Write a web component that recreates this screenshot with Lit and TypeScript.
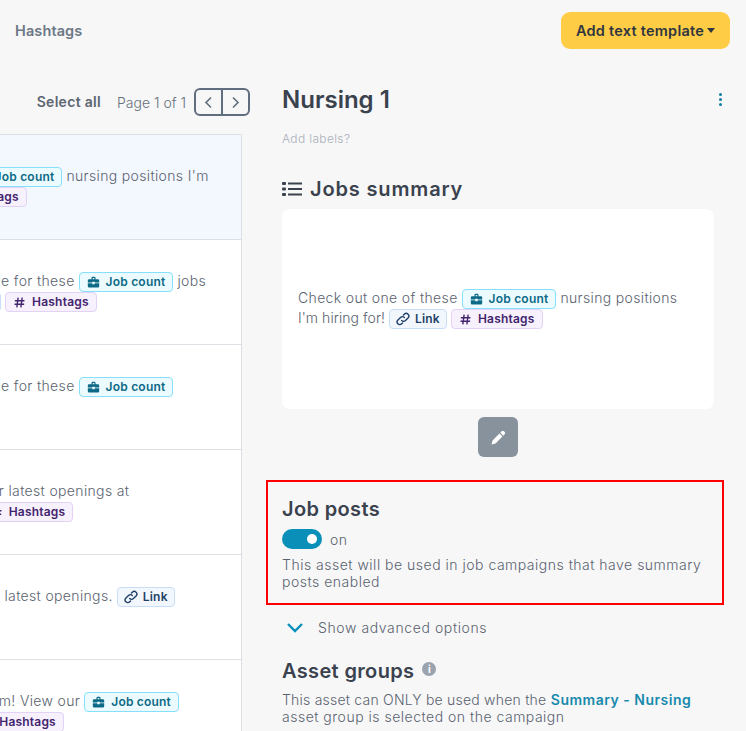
import { LitElement, html, css, svg } from "lit";
import { customElement } from "lit/decorators.js";

const bag = svg`<path fill="currentColor" d="M5.5 2.500A1.500 1.500 0 0 1 7 1h2a1.500 1.500 0 0 1 1.500 1.500V4h3A1.500 1.500 0 0 1 15 5.500V8H9.500V7h-3v1H1V5.500A1.500 1.500 0 0 1 2.500 4h3V2.500zM7 2.500V4h2V2.500H7zM1 9h5.500v1h3V9H15v3.500a1.500 1.500 0 0 1-1.500 1.500h-11A1.500 1.500 0 0 1 1 12.500V9z"/>`;
const link = svg`<g fill="none" stroke="currentColor" stroke-width="1.600" stroke-linecap="round"><path d="M6.500 9.800a3 3 0 0 0 4.300 0l3-3a3 3 0 0 0-4.300-4.300l-1 1"/><path d="M9.500 6.200a3 3 0 0 0-4.300 0l-3 3a3 3 0 0 0 4.300 4.300l1-1"/></g>`;
const hash = svg`<path fill="none" stroke="currentColor" stroke-width="1.700" d="M6.300 2 4.700 14M11.300 2 9.700 14M2.300 5.800h11.800M1.900 10.200h11.800"/>`;

function chip(kind: "job" | "link" | "hash") {
  const map = {
    job: ["Job count", bag],
    link: ["Link", link],
    hash: ["Hashtags", hash],
  } as const;
  const [label, icon] = map[kind];
  return html`<span class="chip ${kind}"><svg viewBox="0 0 16 16">${icon}</svg><span>${label}</span></span>`;
}
const t = (s: string) => html`<span class="t">${s}</span>`;

const rows = [
  { cls: "active first", lines: [
    { x: -196, c: html`${t("Check out one of these")}${chip("job")}${t("nursing positions I'm")}` },
    { x: -197, c: html`${t("hiring for!")}${chip("link")}${chip("hash")}` },
  ]},
  { cls: "", lines: [
    { x: -131, c: html`${t("We have a great role for these")}${chip("job")}${t("jobs")}` },
    { x: -133, c: html`${t("Apply now")}${chip("link")}${chip("hash")}` },
  ]},
  { cls: "", lines: [
    { x: -131, c: html`${t("We have a great role for these")}${chip("job")}` },
  ]},
  { cls: "", lines: [
    { x: -117, c: html`${t("Take a look at our latest openings at")}` },
    { x: -174, c: html`${t("our company")}${chip("link")}${chip("hash")}` },
  ]},
  { cls: "", lines: [
    { x: -121, c: html`${t("Take a look at our latest openings.")}${chip("link")}` },
  ]},
  { cls: "", lines: [
    { x: -138, c: html`${t("Join our nursing team! View our")}${chip("job")}` },
    { x: -104, c: html`${t("open roles")}${chip("hash")}` },
  ]},
];

@customElement("app-root")
export class AppRoot extends LitElement {
  static styles = css`
    :host {
      display: block;
      width: 746px;
      height: 731px;
      overflow: hidden;
      background: #f7f7f8;
      font-family: "Inter", "Liberation Sans", sans-serif;
      color: #3a424e;
    }
    .top {
      height: 60px;
      display: flex;
      align-items: center;
      justify-content: space-between;
      padding: 0 16px 0 15px;
    }
    .crumb { font-size: 14.5px; font-weight: 600; color: #6c7885; letter-spacing: 0.1px; }
    .add {
      width: 169px;
      height: 37px;
      box-sizing: border-box;
      background: #ffcd45;
      border-radius: 9px;
      display: flex;
      align-items: center;
      justify-content: center;
      gap: 3px;
      font-size: 14.5px;
      font-weight: 600;
      letter-spacing: 0.25px;
      color: #2f3640;
    }
    .caret { width: 0; height: 0; border: 4.5px solid transparent; border-top: 5px solid #2f3640; border-bottom: 0; }
    .main { display: flex; }
    .left { width: 250px; flex: none; }
    .pager {
      height: 74px;
      display: flex;
      align-items: flex-start;
      justify-content: flex-end;
      gap: 16px;
      padding-top: 28px;
      box-sizing: border-box;
      font-size: 14px;
    }
    .select { font-weight: 600; color: #5d6672; line-height: 28px; font-size: 14px; letter-spacing: 0.3px; }
    .pageinfo { display: flex; gap: 8px; align-items: center; height: 28px; color: #66707c; font-weight: 300; }
    .nav {
      display: flex;
      width: 56px;
      height: 28px;
      box-sizing: border-box;
      border: 2px solid #5f6d7e;
      border-radius: 6px;
      color: #5f6d7e;
    }
    .nav span { flex: 1; display: flex; align-items: center; justify-content: center; }
    .nav span + span { border-left: 2px solid #5f6d7e; }
    .list {
      width: 242px;
      overflow: hidden;
      box-sizing: border-box;
      border-right: 1px solid #dcdfe4;
    }
    .row {
      height: 105px;
      box-sizing: border-box;
      background: #fff;
      border-bottom: 1px solid #dcdfe4;
      padding-top: 32px;
      white-space: nowrap;
    }
    .row.active { background: #f3f7fe; }
    .row.first { border-top: 1px solid #dcdfe4; height: 106px; }
    .line { height: 20px; display: flex; align-items: center; gap: 4px; line-height: 20px; white-space: nowrap; }
    .t { font-size: 14px; font-weight: 300; color: #5a636f; letter-spacing: 0.35px; position: relative; top: -1px; flex: none; }
    .tight .t:first-child { letter-spacing: 0.05px; }
    .chip {
      display: inline-flex;
      flex: none;
      align-items: center;
      gap: 6px;
      height: 20px;
      box-sizing: border-box;
      padding: 0 7px;
      border: 1px solid;
      border-radius: 4px;
      font-size: 12px;
      font-weight: 600;
      letter-spacing: 0.2px;
      white-space: nowrap;
      line-height: 18px;
    }
    .chip svg { width: 13px; height: 13px; flex: none; }
    .chip.link { gap: 5px; padding: 0 6px; }
    .chip.link svg { width: 14px; height: 14px; }
    .chip.job { background: #ecfbff; border-color: #86e0fb; color: #0c6a86; }
    .chip.link { background: #f2f7fe; border-color: #c7ddf8; color: #1f3f66; }
    .chip.hash { background: #f6f1fc; border-color: #e2d2f6; color: #43246e; }
    .right { width: 432px; margin-left: 32px; flex: none; }
    .titlebar { display: flex; justify-content: space-between; align-items: center; height: 40px; margin-top: 19px; }
    h1 { margin: 0; font-size: 24px; font-weight: 600; color: #3a424e; }
    .dots { display: flex; flex-direction: column; gap: 2px; margin-right: -8px; }
    .dots i { width: 3px; height: 3px; border-radius: 50%; background: #0e7ea3; display: block; }
    .labels { font-size: 12px; font-weight: 300; color: #a9afb8; letter-spacing: 0.35px; margin-top: 12px; height: 16px; line-height: 16px; }
    h2 { margin: 0; font-size: 20px; font-weight: 600; color: #3a424e; letter-spacing: 0.85px; }
    .summary { display: flex; align-items: center; gap: 8px; margin-top: 28px; height: 28px; }
    .card {
      margin-top: 6px;
      height: 200px;
      box-sizing: border-box;
      background: #fff;
      border-radius: 8px;
      padding: 0 16px;
      display: flex;
      flex-direction: column;
      justify-content: center;
      white-space: nowrap;
    }
    .edit {
      width: 40px;
      height: 40px;
      margin: 8px auto 0;
      background: #87929d;
      border-radius: 6px;
      display: flex;
      align-items: center;
      justify-content: center;
      color: #fff;
    }
    .redbox {
      margin: 23px 0 0 -16px;
      width: 458px;
      height: 125px;
      box-sizing: border-box;
      border: 2px solid #ff0000;
      padding: 14px 14px 0;
    }
    h3 { margin: 0; font-size: 20px; font-weight: 600; line-height: 26px; color: #3a424e; letter-spacing: 0.35px; }
    .toggle-row { display: flex; align-items: center; gap: 8px; margin-top: 7px; height: 20px; }
    .toggle { width: 40px; height: 20px; border-radius: 10px; background: #0a90b8; position: relative; }
    .toggle::after { content: ""; position: absolute; width: 10px; height: 10px; border-radius: 50%; background: #fff; right: 5px; top: 5px; }
    .on, .desc, .adv, .para { font-size: 14px; font-weight: 300; color: #5a636f; letter-spacing: 0.5px; }
    .adv { letter-spacing: 0.6px; }
    .desc { margin-top: 7px; line-height: 17px; }
    .adv { display: flex; align-items: center; gap: 14px; height: 24px; margin: 10px 0 0 4px; }
    .groups { display: flex; align-items: center; gap: 8px; margin-top: 19px; height: 26px; }
    .info { width: 14px; height: 14px; border-radius: 50%; background: #9aa3ae; color: #fff; font-size: 10px; font-weight: 700; display: flex; align-items: center; justify-content: center; margin-top: -4px; }
    .para { line-height: 17px; margin-top: 7px; }
    .para .lead { letter-spacing: 0.22px; }
    .para b { font-weight: 600; color: #1889ad; }
  `;

  render() {
    return html`
      <div class="top">
        <span class="crumb">Hashtags</span>
        <div class="add"><span>Add text template</span><i class="caret"></i></div>
      </div>
      <div class="main">
        <div class="left">
          <div class="pager">
            <span class="select">Select all</span>
            <div class="pageinfo">
              <span>Page 1 of 1</span>
              <div class="nav">
                <span><svg width="9" height="13" viewBox="0 0 9 13"><path d="M7 1.500 2 6.500l5 5" fill="none" stroke="currentColor" stroke-width="1.600"/></svg></span>
                <span><svg width="9" height="13" viewBox="0 0 9 13"><path d="m2 1.500 5 5-5 5" fill="none" stroke="currentColor" stroke-width="1.600"/></svg></span>
              </div>
            </div>
          </div>
          <div class="list">
            ${rows.map(
              (r) => html`<div class="row ${r.cls}">
                ${r.lines.map((l) => html`<div class="line" style="margin-left:${l.x}px">${l.c}</div>`)}
              </div>`
            )}
          </div>
        </div>
        <div class="right">
          <div class="titlebar">
            <h1>Nursing 1</h1>
            <div class="dots"><i></i><i></i><i></i></div>
          </div>
          <div class="labels">Add labels?</div>
          <div class="summary">
            <svg width="20" height="16" viewBox="0 0 20 16"><g fill="#3a424e"><rect x="0" y="1" width="4" height="3" rx="1"/><rect x="0" y="6.500" width="4" height="3" rx="1"/><rect x="0" y="12" width="4" height="3" rx="1"/><rect x="6" y="1.500" width="14" height="2"/><rect x="6" y="7" width="14" height="2"/><rect x="6" y="12.500" width="14" height="2"/></g></svg>
            <h2>Jobs summary</h2>
          </div>
          <div class="card">
            <div class="line">${t("Check out one of these")}${chip("job")}${t("nursing positions")}</div>
            <div class="line tight">${t("I'm hiring for!")}${chip("link")}${chip("hash")}</div>
          </div>
          <div class="edit"><svg width="17" height="17" viewBox="0 0 16 16"><path fill="currentColor" d="M11 2.200a1.500 1.500 0 0 1 2.100 0l.7.700a1.500 1.500 0 0 1 0 2.100l-1.300 1.300-2.800-2.800L11 2.200zM8.900 4.300l2.800 2.800-6.500 6.500-3.700.9.900-3.700 6.500-6.500z"/></svg></div>
          <div class="redbox">
            <h3>Job posts</h3>
            <div class="toggle-row"><div class="toggle"></div><span class="on">on</span></div>
            <div class="desc">This asset will be used in job campaigns that have summary posts enabled</div>
          </div>
          <div class="adv">
            <svg width="18" height="11" viewBox="0 0 18 11"><path d="m2 2 7 7 7-7" fill="none" stroke="#0a90b8" stroke-width="2.400"/></svg>
            <span>Show advanced options</span>
          </div>
          <div class="groups"><h3>Asset groups</h3><span class="info">i</span></div>
          <div class="para"><span class="lead">This asset can ONLY be used when the</span> <b>Summary - Nursing</b> asset group is selected on the campaign</div>
        </div>
      </div>
    `;
  }
}
